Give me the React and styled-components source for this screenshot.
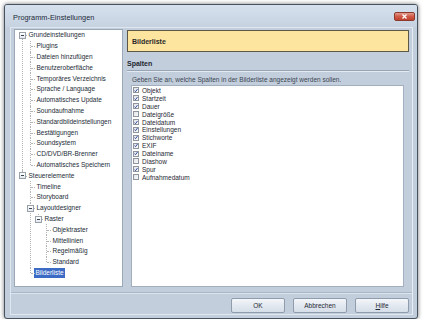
import React from 'react';
import styled, { createGlobalStyle, css } from 'styled-components';

const GlobalStyle = createGlobalStyle`
  html, body {
    margin: 0;
    padding: 0;
    background: #ffffff;
  }
  body {
    padding: 4px 0 0 4px;
    font-family: "Liberation Sans", Arial, sans-serif;
  }
`;

// ---- Fenster ----
const Window = styled.div`
  width: 414px;
  height: 315px;
  box-sizing: border-box;
  border: 1px solid #46525f;
  border-radius: 3px;
  background: #c2cedc;
  box-shadow: 0 0 4px rgba(0, 0, 0, 0.55);
  display: flex;
  flex-direction: column;
`;

const TitleBar = styled.div`
  height: 22px;
  flex: none;
  display: flex;
  align-items: flex-start;
  justify-content: space-between;
  background: linear-gradient(#d6e1ee, #c6d2e0);
  border-radius: 2px 2px 0 0;
`;

const Title = styled.span`
  font-size: 7.3px;
  color: #1b2838;
  margin: 8px 0 0 8px;
  letter-spacing: 0.05px;
`;

const CloseButton = styled.div`
  width: 21px;
  height: 9px;
  margin: 7px 2px 0 0;
  box-sizing: border-box;
  border: 1px solid #8c3a2e;
  border-radius: 2px;
  background: linear-gradient(#e49a8c, #cf5a47 50%, #c0412f);
  display: flex;
  align-items: center;
  justify-content: center;
`;

const Frame = styled.div`
  flex: 1;
  margin: 0 4px 3px 5px;
  border: 1px solid #dfe7f0;
  border-right-color: #e6edf5;
  display: flex;
  flex-direction: column;
`;

const Main = styled.div`
  flex: 1;
  display: flex;
  gap: 4px;
  padding: 1px 3px 5px 3px;
  min-height: 0;
`;

// ---- Baum ----
const TreePanel = styled.div`
  width: 109px;
  flex: none;
  box-sizing: border-box;
  border: 1px solid #9ba8b8;
  background: #ffffff;
  overflow: hidden;
`;

const TreeList = styled.ul`
  list-style: none;
  margin: 0;
  padding: 0;
  ${(p) => p.$nested && css`margin-left: 8px;`}
  ${(p) => !p.$nested && css`margin-left: 3px;`}
`;

const dotted = '1px dotted #b4b4b4';

const TreeItem = styled.li`
  position: relative;
  &::before {
    content: '';
    position: absolute;
    left: 4px;
    top: ${(p) => (p.$first && p.$root ? '5.4px' : '0')};
    height: ${(p) => (p.$last ? (p.$root && p.$first ? '0' : '5.4px') : p.$first && p.$root ? 'calc(100% - 5.4px)' : '100%')};
    border-left: ${dotted};
  }
`;

const TreeRow = styled.div`
  position: relative;
  height: 10.8px;
  padding-left: 9px;
  display: flex;
  align-items: center;
  &::before {
    content: '';
    position: absolute;
    left: 5px;
    top: 5.4px;
    width: 4px;
    border-top: ${dotted};
  }
`;

const Expander = styled.span`
  position: absolute;
  left: 1px;
  top: 2px;
  width: 7px;
  height: 7px;
  box-sizing: border-box;
  border: 1px solid #98a0aa;
  background: linear-gradient(#ffffff, #e4e8ee);
  z-index: 1;
  &::after {
    content: '';
    position: absolute;
    left: 1px;
    top: 2px;
    width: 3px;
    border-top: 1px solid #3a4450;
  }
`;

const TreeLabel = styled.span`
  font-size: 6.5px;
  line-height: 10px;
  height: 10px;
  padding: 0 1.5px;
  white-space: nowrap;
  color: ${(p) => (p.$selected ? '#ffffff' : '#222b36')};
  background: ${(p) => (p.$selected ? '#3b6bc4' : 'transparent')};
  margin-left: ${(p) => (p.$selected ? '-1px' : '0')};
`;

// ---- Rechter Bereich ----
const Content = styled.div`
  flex: 1;
  display: flex;
  flex-direction: column;
  min-width: 0;
`;

const Header = styled.div`
  height: 22px;
  flex: none;
  margin-top: 1px;
  box-sizing: border-box;
  border: 1px solid #5c5845;
  background: #fee59f;
  display: flex;
  align-items: center;
  padding-left: 4px;
  font-size: 7px;
  font-weight: bold;
  color: #2a2a2a;
`;

const SectionTitle = styled.div`
  margin-top: 8px;
  height: 8px;
  padding-bottom: 2px;
  font-size: 7px;
  font-weight: bold;
  line-height: 8px;
  color: #1e2630;
  border-bottom: 1px solid #97a4b5;
  box-shadow: 0 1px 0 #e3eaf2;
`;

const Hint = styled.div`
  margin: 5px 0 0 5px;
  height: 8px;
  font-size: 6.5px;
  line-height: 8px;
  color: #3b4552;
`;

const ColumnList = styled.div`
  flex: 1;
  margin: 1px 5px 0 4px;
  box-sizing: border-box;
  border: 1px solid #a3afbf;
  background: #ffffff;
  padding-top: 0.5px;
`;

const ColumnRow = styled.label`
  height: 7.9px;
  display: flex;
  align-items: center;
  gap: 3px;
  padding-left: 1px;
  font-size: 6.5px;
  color: #1f2833;
`;

const Box = styled.span`
  width: 6px;
  height: 6px;
  box-sizing: border-box;
  border: 1px solid #8f959c;
  background: linear-gradient(135deg, #dfe3e8, #fbfbfc);
  display: flex;
  align-items: center;
  justify-content: center;
  flex: none;
`;

// ---- Fußleiste ----
const Footer = styled.div`
  height: 22px;
  flex: none;
  box-sizing: border-box;
  border-top: 1px solid #a9b6c6;
  box-shadow: inset 0 1px 0 #dce4ee;
  display: flex;
  justify-content: flex-end;
  align-items: flex-start;
  gap: 8px;
  padding: 5px 3px 0 0;
`;

const Button = styled.div`
  width: ${(p) => p.$w || 54}px;
  height: 15px;
  box-sizing: border-box;
  border: 1px solid #8f9cac;
  border-radius: 2px;
  background: linear-gradient(#f3f6fa, #e3e9f0 50%, #d6dee8);
  display: flex;
  align-items: center;
  justify-content: center;
  font-size: 6.5px;
  color: #1f2833;
  u {
    text-decoration: underline;
  }
`;

const tree = [
  {
    label: 'Grundeinstellungen',
    children: [
      'Plugins',
      'Dateien hinzufügen',
      'Benutzeroberfläche',
      'Temporäres Verzeichnis',
      'Sprache / Language',
      'Automatisches Update',
      'Soundaufnahme',
      'Standardbildeinstellungen',
      'Bestätigungen',
      'Soundsystem',
      'CD/DVD/BR-Brenner',
      'Automatisches Speichern',
    ].map((label) => ({ label })),
  },
  {
    label: 'Steuerelemente',
    children: [
      { label: 'Timeline' },
      { label: 'Storyboard' },
      {
        label: 'Layoutdesigner',
        children: [
          {
            label: 'Raster',
            children: ['Objektraster', 'Mittellinien', 'Regelmäßig', 'Standard'].map((label) => ({ label })),
          },
        ],
      },
      { label: 'Bilderliste', selected: true },
    ],
  },
];

const columns = [
  ['Objekt', true],
  ['Startzeit', true],
  ['Dauer', true],
  ['Dateigröße', false],
  ['Dateidatum', true],
  ['Einstellungen', true],
  ['Stichworte', true],
  ['EXIF', true],
  ['Dateiname', true],
  ['Diashow', false],
  ['Spur', true],
  ['Aufnahmedatum', false],
];

function Node({ node, first, last, root }) {
  return (
    <TreeItem $first={first} $last={last} $root={root}>
      <TreeRow>
        {node.children && <Expander />}
        <TreeLabel $selected={node.selected}>{node.label}</TreeLabel>
      </TreeRow>
      {node.children && (
        <TreeList $nested>
          {node.children.map((c, i) => (
            <Node key={c.label} node={c} first={i === 0} last={i === node.children.length - 1} />
          ))}
        </TreeList>
      )}
    </TreeItem>
  );
}

function Check({ on }) {
  return (
    <Box>
      {on && (
        <svg width="5" height="5" viewBox="0 0 5 5">
          <path d="M0.6 2.6 L1.9 4 L4.4 0.7" fill="none" stroke="#23398f" strokeWidth="1.1" />
        </svg>
      )}
    </Box>
  );
}

export default function App() {
  return (
    <>
      <GlobalStyle />
      <Window>
        <TitleBar>
          <Title>Programm-Einstellungen</Title>
          <CloseButton>
            <svg width="7" height="5" viewBox="0 0 7 5">
              <path d="M1.5 0.5 L5.5 4.5 M5.5 0.5 L1.5 4.5" stroke="#ffffff" strokeWidth="1.3" />
            </svg>
          </CloseButton>
        </TitleBar>
        <Frame>
          <Main>
            <TreePanel>
              <TreeList>
                {tree.map((n, i) => (
                  <Node key={n.label} node={n} root first={i === 0} last={i === tree.length - 1} />
                ))}
              </TreeList>
            </TreePanel>
            <Content>
              <Header>Bilderliste</Header>
              <SectionTitle>Spalten</SectionTitle>
              <Hint>Geben Sie an, welche Spalten in der Bilderliste angezeigt werden sollen.</Hint>
              <ColumnList>
                {columns.map(([name, on]) => (
                  <ColumnRow key={name}>
                    <Check on={on} />
                    {name}
                  </ColumnRow>
                ))}
              </ColumnList>
            </Content>
          </Main>
          <Footer>
            <Button>OK</Button>
            <Button>Abbrechen</Button>
            <Button>
              <u>H</u>ilfe
            </Button>
          </Footer>
        </Frame>
      </Window>
    </>
  );
}
